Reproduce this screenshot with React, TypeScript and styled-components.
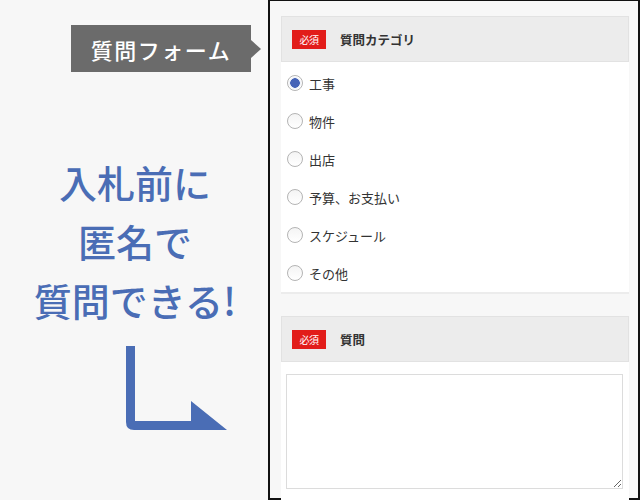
import React from "react";
import styled, { createGlobalStyle } from "styled-components";

const GlobalStyle = createGlobalStyle`
  html, body {
    margin: 0;
    padding: 0;
    background: #f7f7f7;
    font-family: "Noto Sans CJK JP", "Noto Sans", sans-serif;
  }
`;

const categories = ["工事", "物件", "出店", "予算、お支払い", "スケジュール", "その他"];

const App = () => {
  return (
    <React.Fragment>
      <GlobalStyle />
      <Page>
        <Intro>
          <LabelRow>
            <Label>質問フォーム</Label>
          </LabelRow>
          <Heading>
            入札前に
            <br />
            匿名で
            <br />
            質問できる!
          </Heading>
          <Arrow width="101" height="84" viewBox="0 0 101 84">
            <path d="M0 0 H9 V75 H65 V55 L101 84 H8 Q0 84 0 76 Z" fill="#4a6db5" />
          </Arrow>
        </Intro>
        <Panel>
          <Section>
            <FieldHeader>
              <Badge>必須</Badge>
              <FieldTitle>質問カテゴリ</FieldTitle>
            </FieldHeader>
            <Options>
              {categories.map((value, index) => (
                <Option key={`category-${index}`}>
                  <Radio checked={index === 0} />
                  <OptionText>{value}</OptionText>
                </Option>
              ))}
            </Options>
          </Section>
          <Section>
            <FieldHeader>
              <Badge>必須</Badge>
              <FieldTitle>質問</FieldTitle>
            </FieldHeader>
            <AreaBox>
              <TextArea />
            </AreaBox>
          </Section>
        </Panel>
      </Page>
    </React.Fragment>
  );
};

const Page = styled.div`
  display: flex;
  width: 640px;
  height: 500px;
  overflow: hidden;
`;

const Intro = styled.div`
  width: 268px;
  flex-shrink: 0;
  display: flex;
  flex-direction: column;
  padding-top: 25px;
  box-sizing: border-box;
`;

const LabelRow = styled.div`
  display: flex;
  padding-left: 71px;
`;

const Label = styled.div`
  position: relative;
  width: 180px;
  height: 47px;
  background: #6b6b6b;
  color: #fff;
  font-size: 22px;
  font-weight: 500;
  letter-spacing: 1.5px;
  display: flex;
  align-items: center;
  justify-content: center;
  padding-top: 1px;
  box-sizing: border-box;

  &::after {
    content: "";
    position: absolute;
    left: 100%;
    top: 50%;
    margin-top: -9px;
    border-style: solid;
    border-width: 9px 0 9px 10px;
    border-color: transparent transparent transparent #6b6b6b;
  }
`;

const Heading = styled.div`
  margin-top: 80px;
  text-align: center;
  color: #4a6db5;
  font-size: 38px;
  font-weight: 500;
  line-height: 59px;
  padding-left: 2px;
`;

const Arrow = styled.svg`
  display: block;
  margin-top: 17px;
  margin-left: 126px;
`;

const Panel = styled.div`
  flex: 1;
  height: 500px;
  box-sizing: border-box;
  border: 2px solid #111;
  border-top-width: 1px;
  background: #f7f7f7;
  padding: 15px 9px 0 11px;
  display: flex;
  flex-direction: column;
  gap: 22px;
`;

const Section = styled.div`
  display: flex;
  flex-direction: column;
`;

const FieldHeader = styled.div`
  height: 46px;
  box-sizing: border-box;
  background: #ececec;
  border: 1px solid #e2e2e2;
  display: flex;
  align-items: center;
  padding-left: 10px;
`;

const Badge = styled.span`
  width: 34px;
  height: 19px;
  background: #e21d1a;
  color: #fff;
  font-size: 10px;
  display: flex;
  align-items: center;
  justify-content: center;
  letter-spacing: -0.5px;
`;

const FieldTitle = styled.span`
  margin-left: 14px;
  font-size: 12.5px;
  font-weight: 700;
  color: #333;
`;

const Options = styled.div`
  background: #fff;
  border-bottom: 2px solid #ececec;
  padding: 2px 0 0 6px;
  display: flex;
  flex-direction: column;
`;

const Option = styled.label`
  height: 38px;
  display: flex;
  align-items: center;
`;

const Radio = styled.span<{ checked: boolean }>`
  width: 16px;
  height: 16px;
  box-sizing: border-box;
  border-radius: 50%;
  border: 1px solid #b4b4b4;
  background: ${(props) =>
    props.checked
      ? "radial-gradient(circle, #4563b7 0 4.5px, #e8ecf5 5px, #fff 6.5px)"
      : "linear-gradient(#f4f4f4, #fff)"};
`;

const OptionText = styled.span`
  margin-left: 6px;
  font-size: 13px;
  color: #333;
`;

const AreaBox = styled.div`
  background: #fff;
  height: 140px;
  padding: 12px 6px 0 5px;
`;

const TextArea = styled.textarea`
  display: block;
  width: 100%;
  height: 115px;
  box-sizing: border-box;
  border: 1px solid #dcdcdc;
  resize: vertical;
  outline: none;
`;

export default App;
